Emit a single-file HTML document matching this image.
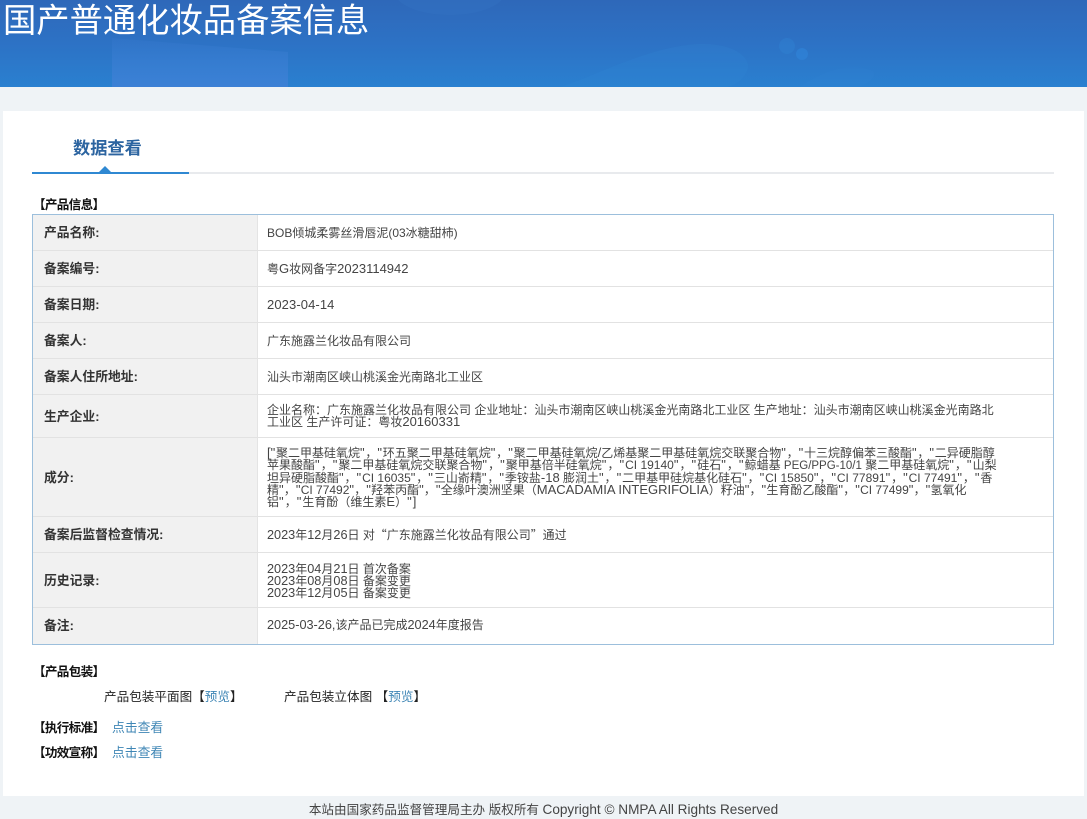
<!DOCTYPE html>
<html lang="zh-CN">
<head>
<meta charset="utf-8">
<title>国产普通化妆品备案信息</title>
<style>
html,body{margin:0;padding:0;width:1087px;height:819px;overflow:hidden;background:#eff3f6}
body{position:relative;font-family:"Liberation Sans","Noto Sans CJK SC",sans-serif;color:#333}
.a{position:absolute;white-space:nowrap}
#hd{left:0;top:0;width:1087px;height:87px;overflow:hidden;background:linear-gradient(180deg,#2e68b9 0%,#2d72c5 50%,#2a80d0 100%)}
#panel{left:3px;top:111px;width:1081px;height:685px;background:#fff}
#tbl{left:32px;top:214px;width:1020px;height:429px;border:1px solid #9cbfdc;background:#fff;overflow:hidden}
.lab{position:absolute;left:0;width:224px;background:#f1f1f1;border-right:1px solid #e4e4e4;border-bottom:1px solid #e2e2e2}
.val{position:absolute;left:225px;right:0;border-bottom:1px solid #e2e2e2}
.lt{position:absolute;left:11px;font-size:12.8px;font-weight:bold;color:#333;line-height:14px;white-space:nowrap}
.vt{position:absolute;left:9px;font-size:12px;color:#444;line-height:12px;white-space:nowrap}
.vt i{font-style:normal;font-size:13px}
.vt em{font-style:normal;font-size:12.7px}
.vt s{text-decoration:none;font-size:13px;letter-spacing:var(--q,1.05px)}
.vt u{text-decoration:none;font-size:12px}
.vt b{font-weight:normal;font-family:"Noto Sans CJK SC",sans-serif}
.h{font-size:12.6px;font-weight:bold;color:#111;line-height:16px;letter-spacing:-.7px}
.n{font-size:12.6px;color:#222;line-height:16px}
.l{color:#3f86b5}
</style>
</head>
<body>
<div class="a" id="hd">
  <svg width="1087" height="87" style="position:absolute;left:0;top:0">
    <defs><linearGradient id="g" x1="0" y1="0" x2="0" y2="1"><stop offset="0" stop-color="#3f80d6" stop-opacity=".15"/><stop offset="1" stop-color="#3f80d6" stop-opacity=".85"/></linearGradient></defs>
    <ellipse cx="450" cy="-8" rx="55" ry="23" fill="#3573c4" opacity=".4"/>
    <path d="M112 38L288 52V87H112Z" fill="url(#g)"/>
    <path d="M560 87C600 74 650 46 700 44C735 43 750 58 748 68C745 78 738 84 728 87Z" fill="#3388d6" opacity=".22"/>
    <circle cx="787" cy="46" r="8" fill="#3186d8" opacity=".35"/>
    <circle cx="802" cy="54" r="6" fill="#2f88de" opacity=".5"/>
    <path d="M800 87C820 72 850 62 870 70C880 74 870 82 860 87Z" fill="#3388da" opacity=".15"/>
  </svg>
  <div class="a" style="left:3px;top:-3px;font-size:33.3px;line-height:50px;color:#fff">国产普通化妆品备案信息</div>
</div>
<div class="a" id="panel"></div>

<div class="a" style="left:73px;top:137px;font-size:17.2px;font-weight:bold;line-height:22px;color:#2c64a0">数据查看</div>
<div class="a" style="left:32px;top:172px;width:1022px;height:2px;background:#e8eaed"></div>
<div class="a" style="left:32px;top:172px;width:157px;height:2px;background:#2f88d2"></div>
<div class="a" style="left:99px;top:166px;width:0;height:0;border-left:6px solid transparent;border-right:6px solid transparent;border-bottom:6px solid #2f88d2"></div>

<div class="a h" style="left:33px;top:197px">【产品信息】</div>

<div class="a" id="tbl">
  <div class="lab" style="top:0;height:35px"><div class="lt" style="top:11px">产品名称:</div></div>
  <div class="val" style="top:0;height:35px"><div class="vt" style="top:12px">BOB倾城柔雾丝滑唇泥(03冰糖甜柿)</div></div>

  <div class="lab" style="top:36px;height:35px"><div class="lt" style="top:11px">备案编号:</div></div>
  <div class="val" style="top:36px;height:35px"><div class="vt" style="top:12px">粤<i>G</i>妆网备字<i>2023114942</i></div></div>

  <div class="lab" style="top:72px;height:35px"><div class="lt" style="top:11px">备案日期:</div></div>
  <div class="val" style="top:72px;height:35px"><div class="vt" style="top:12px"><i style="letter-spacing:.1px">2023-04-14</i></div></div>

  <div class="lab" style="top:108px;height:35px"><div class="lt" style="top:11px">备案人:</div></div>
  <div class="val" style="top:108px;height:35px"><div class="vt" style="top:12px">广东施露兰化妆品有限公司</div></div>

  <div class="lab" style="top:144px;height:35px"><div class="lt" style="top:11px">备案人住所地址:</div></div>
  <div class="val" style="top:144px;height:35px"><div class="vt" style="top:12px">汕头市潮南区峡山桃溪金光南路北工业区</div></div>

  <div class="lab" style="top:180px;height:42px"><div class="lt" style="top:15px">生产企业:</div></div>
  <div class="val" style="top:180px;height:42px"><div class="vt" style="top:9px">企业名称：广东施露兰化妆品有限公司 企业地址：汕头市潮南区峡山桃溪金光南路北工业区 生产地址：汕头市潮南区峡山桃溪金光南路北<br>工业区 生产许可证：粤妆<i>20160331</i></div></div>

  <div class="lab" style="top:223px;height:78px"><div class="lt" style="top:33px">成分:</div></div>
  <div class="val" style="top:223px;height:78px"><div class="vt" style="top:9px"><span style="--q:.75px"><i>[</i><s>"</s>聚二甲基硅氧烷<s>"</s>，<s>"</s>环五聚二甲基硅氧烷<s>"</s>，<s>"</s>聚二甲基硅氧烷<i>/</i>乙烯基聚二甲基硅氧烷交联聚合物<s>"</s>，<s>"</s>十三烷醇偏苯三酸酯<s>"</s>，<s>"</s>二异硬脂醇</span><br>苹果酸酯<s>"</s>，<s>"</s>聚二甲基硅氧烷交联聚合物<s>"</s>，<s>"</s>聚甲基倍半硅氧烷<s>"</s>，<s>"</s><u>CI 19140</u><s>"</s>，<s>"</s>硅石<s>"</s>，<s>"</s>鲸蜡基 <span style="font-size:11.5px">PEG/PPG-10/1</span> 聚二甲基硅氧烷<s>"</s>，<s>"</s>山梨<br><span style="--q:.9px">坦异硬脂酸酯<s>"</s>，<s>"</s><u>CI 16035</u><s>"</s>，<s>"</s>三山嵛精<s>"</s>，<s>"</s>季铵盐<i>-18</i> 膨润土<s>"</s>，<s>"</s>二甲基甲硅烷基化硅石<s>"</s>，<s>"</s><u>CI 15850</u><s>"</s>，<s>"</s><u>CI 77891</u><s>"</s>，<s>"</s><u>CI 77491</u><s>"</s>，<s>"</s>香</span><br><span style="--q:.2px">精<s>"</s>，<s>"</s><u>CI 77492</u><s>"</s>，<s>"</s>羟苯丙酯<s>"</s>，<s>"</s>全缘叶澳洲坚果（<i>MACADAMIA INTEGRIFOLIA</i>）籽油<s>"</s>，<s>"</s>生育酚乙酸酯<s>"</s>，<s>"</s><u>CI 77499</u><s>"</s>，<s>"</s>氢氧化</span><br>铝<s>"</s>，<s>"</s>生育酚（维生素<i>E</i>）<s>"</s><i>]</i></div></div>

  <div class="lab" style="top:302px;height:35px"><div class="lt" style="top:11px">备案后监督检查情况:</div></div>
  <div class="val" style="top:302px;height:35px"><div class="vt" style="top:12px"><em>2023</em>年<em>12</em>月<em>26</em>日 对 <b style="margin-left:-3.5px">“</b>广东施露兰化妆品有限公司<b style="margin-right:-3.5px">”</b> 通过</div></div>

  <div class="lab" style="top:338px;height:54px"><div class="lt" style="top:21px">历史记录:</div></div>
  <div class="val" style="top:338px;height:54px"><div class="vt" style="top:10px"><em>2023</em>年<em>04</em>月<em>21</em>日 首次备案<br><em>2023</em>年<em>08</em>月<em>08</em>日 备案变更<br><em>2023</em>年<em>12</em>月<em>05</em>日 备案变更</div></div>

  <div class="lab" style="top:393px;height:36px;border-bottom:0"><div class="lt" style="top:11px">备注:</div></div>
  <div class="val" style="top:393px;height:36px;border-bottom:0"><div class="vt" style="top:11px"><em>2025-03-26,</em>该产品已完成<em>2024</em>年度报告</div></div>
</div>

<div class="a h" style="left:33px;top:664px">【产品包装】</div>
<div class="a n" style="left:104px;top:689px">产品包装平面图【<span class="l">预览</span>】</div>
<div class="a n" style="left:284px;top:689px">产品包装立体图 【<span class="l">预览</span>】</div>
<div class="a h" style="left:33px;top:720px">【执行标准】</div>
<div class="a n l" style="left:112px;top:720px;font-size:12.8px">点击查看</div>
<div class="a h" style="left:33px;top:745px">【功效宣称】</div>
<div class="a n l" style="left:112px;top:745px;font-size:12.8px">点击查看</div>

<div class="a" style="left:0;width:1087px;top:801px;text-align:center;font-size:12.6px;line-height:18px;color:#444">本站由国家药品监督管理局主办 版权所有 <span style="font-size:13.6px">Copyright © NMPA All Rights Reserved</span></div>
</body>
</html>
